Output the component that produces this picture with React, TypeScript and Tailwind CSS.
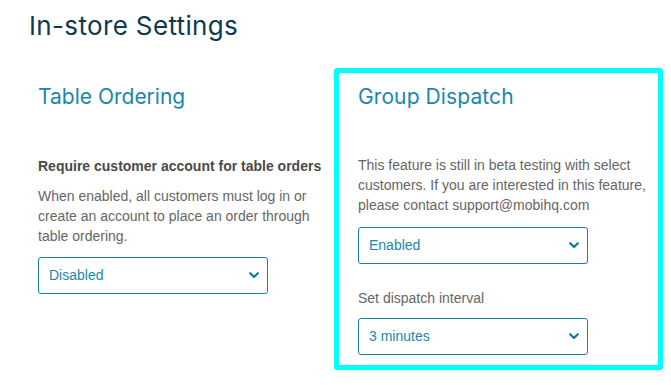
import React from "react";

function Chevron() {
  return (
    <svg width="10" height="7" viewBox="0 0 10 7" className="shrink-0">
      <path d="M1.2 1.2 L5 5 L8.8 1.2" fill="none" stroke="#1479a0" strokeWidth="2.2" strokeLinecap="round" strokeLinejoin="round" />
    </svg>
  );
}

function Select({ value }: { value: string }) {
  return (
    <div className="flex h-[37px] w-[230px] items-center justify-between rounded-[3px] border border-[#1b7ea3] bg-white pl-[10px] pr-[8px] text-[14px] text-[#1a87b0]">
      <span>{value}</span>
      <Chevron />
    </div>
  );
}

export default function App() {
  const body = { fontFamily: '"Liberation Sans", Arial, sans-serif' };
  const head = { fontFamily: 'Inter, "Open Sans", sans-serif' };
  return (
    <div className="h-[385px] w-[671px] overflow-hidden bg-white px-[14px] pt-[10px]" style={body}>
      <h1 className="ml-[15px] text-[26px] font-normal leading-[32px] tracking-[0.35px] text-[#0d3a4f]" style={head}>
        In-store Settings
      </h1>
      <div className="mt-[26px] flex">
        <div className="w-[320px] shrink-0 border-[5px] border-transparent pl-[19px] pt-[11px]">
          <h2 className="text-[21px] font-normal leading-[26px] tracking-[0px] text-[#1b86ad]" style={head}>
            Table Ordering
          </h2>
          <p className="mt-[46px] whitespace-nowrap text-[14px] font-bold leading-[20px] text-[#4a4a4a]">
            Require customer account for table orders
          </p>
          <p className="mt-[10px] w-[290px] text-[14px] leading-[20px] text-[#666666]">
            When enabled, all customers must log in or create an account to place an order through table ordering.
          </p>
          <div className="mt-[11px]">
            <Select value="Disabled" />
          </div>
        </div>
        <div className="w-[329px] shrink-0 rounded-[3px] border-[5px] border-[#00ffff] pb-[10px] pl-[19px] pr-[4px] pt-[11px]">
          <h2 className="text-[21px] font-normal leading-[26px] tracking-[0.1px] text-[#1b86ad]" style={head}>
            Group Dispatch
          </h2>
          <p className="mt-[45px] text-[14px] leading-[20px] text-[#666666]">
            This feature is still in beta testing with select customers. If you are interested in this feature, please contact support@mobihq.com
          </p>
          <div className="mt-[12px]">
            <Select value="Enabled" />
          </div>
          <p className="mt-[24px] text-[14px] leading-[20px] text-[#666666]">Set dispatch interval</p>
          <div className="mt-[10px]">
            <Select value="3 minutes" />
          </div>
        </div>
      </div>
    </div>
  );
}
